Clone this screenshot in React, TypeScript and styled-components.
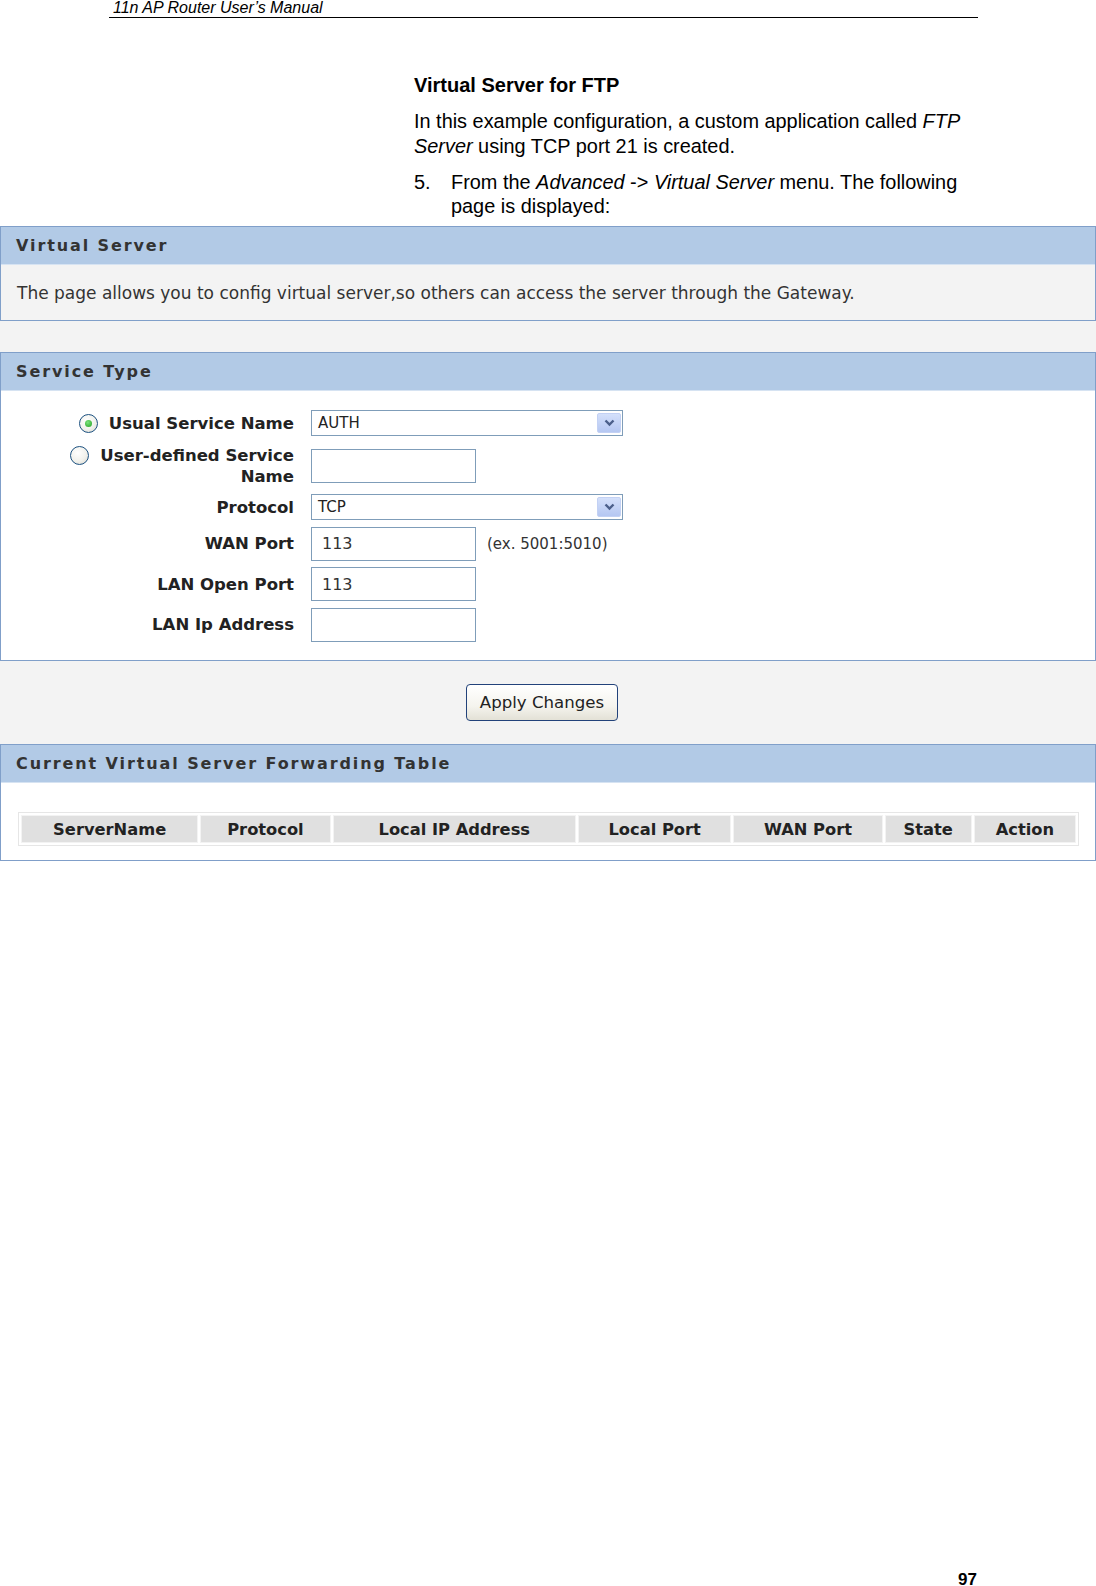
import React from "react";
import styled, { createGlobalStyle } from "styled-components";

const GlobalStyle = createGlobalStyle`
  html, body {
    margin: 0;
    padding: 0;
    background: #ffffff;
  }
`;

const UI_FONT = `"DejaVu Sans", Verdana, sans-serif`;
const DOC_FONT = `"Liberation Sans", Arial, sans-serif`;

const Page = styled.div`
  width: 1096px;
  height: 1586px;
  display: flex;
  flex-direction: column;
  font-family: ${DOC_FONT};
  color: #000;
`;

const RunningHead = styled.div`
  margin-left: 109px;
  width: 869px;
  border-bottom: 1px solid #000;
  font-style: italic;
  font-size: 16px;
  line-height: 15px;
  padding: 0 0 2px 4px;
  box-sizing: border-box;
`;

const Intro = styled.div`
  margin: 55px 0 0 414px;
  width: 570px;
`;

const IntroTitle = styled.div`
  font-weight: bold;
  font-size: 20px;
  line-height: 24px;
`;

const IntroText = styled.p`
  margin: 12px 0 0;
  font-size: 19.9px;
  line-height: 24.5px;
`;

const Step = styled.div`
  display: flex;
  margin-top: 12px;
  font-size: 19.9px;
  line-height: 24px;
`;

const StepNum = styled.span`
  width: 37px;
  flex: none;
`;

const Screen = styled.div`
  margin-top: 8px;
  background: #f3f3f3;
  font-family: ${UI_FONT};
  color: #2b2b2b;
`;

const Panel = styled.section<{ $bg?: string }>`
  border: 1px solid #809fc9;
  background: ${(p) => p.$bg || "#ffffff"};
`;

const PanelHead = styled.div`
  height: 37px;
  background: #b2cae6;
  border-bottom: 1px solid #d6e3f2;
  display: flex;
  align-items: center;
  padding-left: 15px;
  font-weight: bold;
  font-size: 16px;
  letter-spacing: 1.9px;
  color: #333;
`;

const Description = styled.div`
  height: 55px;
  display: flex;
  align-items: center;
  padding-left: 16px;
  font-size: 17px;
  color: #333;
`;

const Gap = styled.div<{ $h: number }>`
  height: ${(p) => p.$h}px;
  display: flex;
  align-items: center;
  justify-content: center;
`;

const FormBody = styled.div`
  padding: 13px 0 17px;
`;

const Row = styled.div<{ $h: number }>`
  height: ${(p) => p.$h}px;
  display: flex;
  align-items: center;
`;

const Label = styled.div`
  width: 293px;
  flex: none;
  display: flex;
  justify-content: flex-end;
  align-items: flex-start;
  gap: 11px;
  text-align: right;
  font-weight: bold;
  font-size: 16.5px;
  line-height: 21px;
  color: #222;
`;

const Control = styled.div`
  margin-left: 17px;
  display: flex;
  align-items: center;
`;

const Radio = styled.span<{ $on?: boolean }>`
  width: 17px;
  height: 17px;
  margin-top: 1px;
  flex: none;
  border-radius: 50%;
  border: 1px solid #1c5180;
  background: radial-gradient(circle at 40% 35%, #ffffff 0%, #f1f1ec 55%, #d5d4cc 100%);
  display: flex;
  align-items: center;
  justify-content: center;
  &::after {
    content: "";
    display: ${(p) => (p.$on ? "block" : "none")};
    width: 7px;
    height: 7px;
    border-radius: 50%;
    background: radial-gradient(circle at 40% 35%, #7ce27c, #21a121);
  }
`;

const Select = styled.div<{ $w: number }>`
  width: ${(p) => p.$w}px;
  height: 26px;
  box-sizing: border-box;
  border: 1px solid #7f9db9;
  background: #fff;
  display: flex;
  align-items: center;
  justify-content: space-between;
  padding: 0 1px 0 6px;
  font-size: 15px;
  color: #222;
`;

const SelectArrow = styled.span`
  width: 24px;
  height: 20px;
  border-radius: 2px;
  background: linear-gradient(#d4e0fb, #b5c7f2);
  border: 1px solid #c3d1f4;
  box-sizing: border-box;
  display: flex;
  align-items: center;
  justify-content: center;
`;

const TextBox = styled.div<{ $w: number }>`
  width: ${(p) => p.$w}px;
  height: 34px;
  box-sizing: border-box;
  border: 1px solid #7f9db9;
  background: #fff;
  display: flex;
  align-items: center;
  padding-left: 10px;
  font-size: 16px;
  color: #333;
`;

const Hint = styled.span`
  margin-left: 11px;
  font-size: 15px;
  color: #333;
`;

const ApplyButton = styled.button`
  width: 152px;
  height: 37px;
  margin-left: -12px;
  border: 1px solid #22427a;
  border-radius: 4px;
  background: linear-gradient(#ffffff 0%, #f5f4ee 60%, #e3e1d6 100%);
  font-family: ${UI_FONT};
  font-size: 16.6px;
  color: #222;
  padding: 0;
`;

const TableBody = styled.div`
  padding: 29px 17px 14px 17px;
`;

const Table = styled.table`
  width: 1061px;
  table-layout: fixed;
  border-collapse: separate;
  border-spacing: 2px;
  border: 1px solid #e6e6e6;
`;

const Th = styled.th`
  height: 26px;
  padding: 0;
  background: #e0e0e0;
  border: 1px solid #f3f3f3;
  font-weight: bold;
  font-size: 16.3px;
  color: #222;
  text-align: center;
`;

const PageNum = styled.div`
  margin-top: auto;
  margin-left: 958px;
  font-weight: bold;
  font-size: 17px;
  line-height: 13px;
`;

const Chevron = () => (
  <svg width="11" height="8" viewBox="0 0 11 8">
    <path d="M1.5 1.5 L5.5 5.5 L9.5 1.5" fill="none" stroke="#4b5f8a" strokeWidth="2.4" />
  </svg>
);

const columns: [string, number][] = [
  ["ServerName", 177],
  ["Protocol", 130],
  ["Local IP Address", 243],
  ["Local Port", 153],
  ["WAN Port", 149],
  ["State", 87],
  ["Action", 102],
];

export default function App() {
  return (
    <>
      <GlobalStyle />
      <Page>
        <RunningHead>11n AP Router User’s Manual</RunningHead>
        <Intro>
          <IntroTitle>Virtual Server for FTP</IntroTitle>
          <IntroText>
            In this example configuration, a custom application called <i>FTP Server</i> using TCP port 21 is
            created.
          </IntroText>
          <Step>
            <StepNum>5.</StepNum>
            <span>
              From the <i>Advanced</i> -&gt; <i>Virtual Server</i> menu. The following page is displayed:
            </span>
          </Step>
        </Intro>

        <Screen>
          <Panel $bg="#f3f3f3">
            <PanelHead>Virtual Server</PanelHead>
            <Description>
              The page allows you to config virtual server,so others can access the server through the Gateway.
            </Description>
          </Panel>

          <Gap $h={31} />

          <Panel>
            <PanelHead>Service Type</PanelHead>
            <FormBody>
              <Row $h={38}>
                <Label>
                  <Radio $on />
                  <span>Usual Service Name</span>
                </Label>
                <Control>
                  <Select $w={312}>
                    AUTH
                    <SelectArrow>
                      <Chevron />
                    </SelectArrow>
                  </Select>
                </Control>
              </Row>
              <Row $h={47}>
                <Label>
                  <Radio />
                  <span>
                    User-defined Service
                    <br />
                    Name
                  </span>
                </Label>
                <Control>
                  <TextBox $w={165} />
                </Control>
              </Row>
              <Row $h={36}>
                <Label>Protocol</Label>
                <Control>
                  <Select $w={312}>
                    TCP
                    <SelectArrow>
                      <Chevron />
                    </SelectArrow>
                  </Select>
                </Control>
              </Row>
              <Row $h={37}>
                <Label>WAN Port</Label>
                <Control>
                  <TextBox $w={165}>113</TextBox>
                  <Hint>(ex. 5001:5010)</Hint>
                </Control>
              </Row>
              <Row $h={44}>
                <Label>LAN Open Port</Label>
                <Control>
                  <TextBox $w={165}>113</TextBox>
                </Control>
              </Row>
              <Row $h={37}>
                <Label>LAN Ip Address</Label>
                <Control>
                  <TextBox $w={165} />
                </Control>
              </Row>
            </FormBody>
          </Panel>

          <Gap $h={83}>
            <ApplyButton type="button">Apply Changes</ApplyButton>
          </Gap>

          <Panel>
            <PanelHead>Current Virtual Server Forwarding Table</PanelHead>
            <TableBody>
              <Table>
                <colgroup>
                  {columns.map(([name, w]) => (
                    <col key={name} style={{ width: w }} />
                  ))}
                </colgroup>
                <thead>
                  <tr>
                    {columns.map(([name]) => (
                      <Th key={name}>{name}</Th>
                    ))}
                  </tr>
                </thead>
              </Table>
            </TableBody>
          </Panel>
        </Screen>

        <PageNum>97</PageNum>
      </Page>
    </>
  );
}
